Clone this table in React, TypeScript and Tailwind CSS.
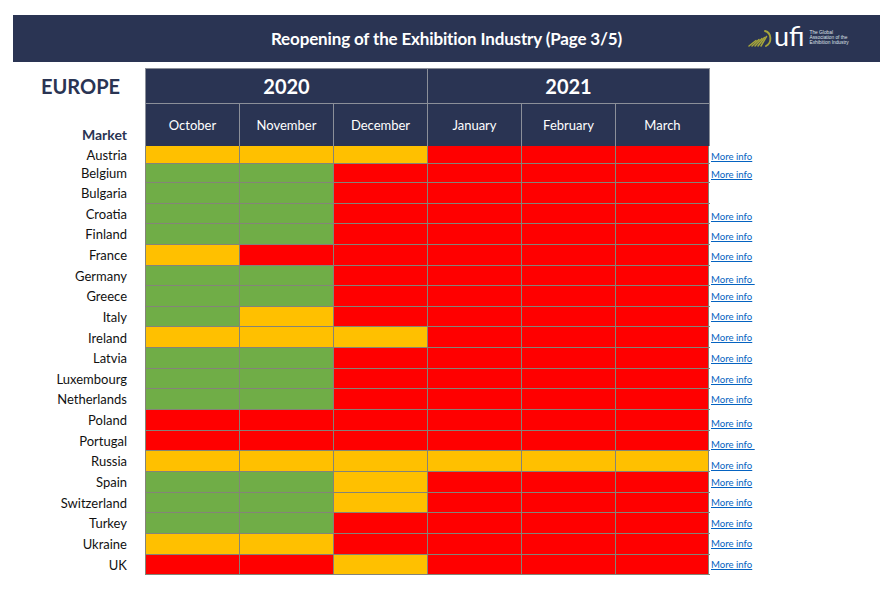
import React from "react";

type C = "Y" | "G" | "R";
const rows: { name: string; cells: C[]; link: boolean; trail?: boolean; shift: number }[] = [
  { name: "Austria", cells: ["Y", "Y", "Y", "R", "R", "R"], link: true, shift: 2 },
  { name: "Belgium", cells: ["G", "G", "R", "R", "R", "R"], link: true, shift: 1 },
  { name: "Bulgaria", cells: ["G", "G", "R", "R", "R", "R"], link: false, shift: 0 },
  { name: "Croatia", cells: ["G", "G", "R", "R", "R", "R"], link: true, shift: 3 },
  { name: "Finland", cells: ["G", "G", "R", "R", "R", "R"], link: true, shift: 2 },
  { name: "France", cells: ["Y", "R", "R", "R", "R", "R"], link: true, shift: 2 },
  { name: "Germany", cells: ["G", "G", "R", "R", "R", "R"], link: true, trail: true, shift: 4 },
  { name: "Greece", cells: ["G", "G", "R", "R", "R", "R"], link: true, shift: 0 },
  { name: "Italy", cells: ["G", "Y", "R", "R", "R", "R"], link: true, shift: 0 },
  { name: "Ireland", cells: ["Y", "Y", "Y", "R", "R", "R"], link: true, shift: 0 },
  { name: "Latvia", cells: ["G", "G", "R", "R", "R", "R"], link: true, shift: 0 },
  { name: "Luxembourg", cells: ["G", "G", "R", "R", "R", "R"], link: true, shift: 1 },
  { name: "Netherlands", cells: ["G", "G", "R", "R", "R", "R"], link: true, shift: 0 },
  { name: "Poland", cells: ["R", "R", "R", "R", "R", "R"], link: true, shift: 3 },
  { name: "Portugal", cells: ["R", "R", "R", "R", "R", "R"], link: true, trail: true, shift: 4 },
  { name: "Russia", cells: ["Y", "Y", "Y", "Y", "Y", "Y"], link: true, shift: 4 },
  { name: "Spain", cells: ["G", "G", "Y", "R", "R", "R"], link: true, shift: 1 },
  { name: "Switzerland", cells: ["G", "G", "Y", "R", "R", "R"], link: true, shift: 0 },
  { name: "Turkey", cells: ["G", "G", "R", "R", "R", "R"], link: true, shift: 0 },
  { name: "Ukraine", cells: ["Y", "Y", "R", "R", "R", "R"], link: true, shift: 0 },
  { name: "UK", cells: ["R", "R", "Y", "R", "R", "R"], link: true, shift: 0 },
];

const bg: Record<C, string> = {
  Y: "bg-[#ffc000]",
  G: "bg-[#70ad47]",
  R: "bg-[#ff0000]",
};

const shiftCls: Record<number, string> = {
  0: "",
  1: "pt-[2px]",
  2: "pt-[4px]",
  3: "pt-[6px]",
  4: "pt-[8px]",
};

const heightCls = (i: number) =>
  i === 0 ? "h-[18px]" : i === 1 ? "h-[19px]" : "h-[20.65px]";

const months = ["October", "November", "December", "January", "February", "March"];

function Logo() {
  return (
    <div className="flex items-center">
      <svg width="25" height="20" viewBox="0 0 25 20">
        <g stroke="#a7a63a" strokeWidth="1.5" strokeLinecap="round" fill="none">
          <line x1="1" y1="18" x2="8" y2="12.5" />
          <line x1="4" y1="18" x2="11" y2="11.5" />
          <line x1="7" y1="18" x2="14" y2="10.5" />
          <line x1="10" y1="18" x2="16.5" y2="9.5" />
          <line x1="13" y1="18" x2="18.5" y2="8.5" />
          <path d="M17 3 C 24 5, 24 15, 18 18" strokeWidth="1.9" />
        </g>
      </svg>
      <span className="ml-[1px] text-white text-[27px] leading-none font-['Lato',sans-serif] -mt-[4px]">
        ufi
      </span>
      <div className="ml-[5px] flex flex-col text-[4.8px] leading-[5.2px] text-[#dfe2ea] font-['Liberation_Sans',sans-serif]">
        <span>The Global</span>
        <span>Association of the</span>
        <span>Exhibition Industry</span>
      </div>
    </div>
  );
}

export default function App() {
  return (
    <div className="w-[892px] h-[605px] bg-white font-['Lato',sans-serif] text-[#111]">
      <div className="pt-[15px] px-[13px] w-[893px]">
        <div className="h-[47px] bg-[#2a3453] relative flex items-center justify-center">
          <span className="text-white font-bold text-[17px] tracking-[-0.15px] pt-[1px]">
            Reopening of the Exhibition Industry (Page 3/5)
          </span>
          <div className="absolute left-[735px] top-[11px]">
            <Logo />
          </div>
        </div>
      </div>

      <div className="mt-[6px] flex">
        <div className="w-[145px] flex flex-col">
          <div className="h-[36px] flex items-center pl-[41px]">
            <span className="text-[20px] font-bold text-[#2a3453]">EUROPE</span>
          </div>
          <div className="h-[42px] flex items-end justify-end pr-[18px] pb-[1px]">
            <span className="text-[14px] font-bold text-[#2a3453]">Market</span>
          </div>
        </div>
        <div className="w-[565px] bg-[#2a3453] border border-[#8b8f99] border-b-0 flex flex-col">
          <div className="h-[35px] flex border-b border-[#8b8f99]">
            <div className="w-[282px] border-r border-[#8b8f99] flex items-center justify-center text-white font-bold text-[20px]">
              2020
            </div>
            <div className="flex-1 flex items-center justify-center text-white font-bold text-[20px]">
              2021
            </div>
          </div>
          <div className="h-[42px] flex">
            {months.map((m, i) => (
              <div
                key={m}
                className={
                  "w-[94px] flex items-center justify-center text-white text-[13px] pt-[1px] " +
                  (i < 5 ? "border-r border-[#8b8f99]" : "flex-1")
                }
              >
                {m}
              </div>
            ))}
          </div>
        </div>
      </div>

      <div className="flex flex-col">
        {rows.map((r, i) => (
          <div key={r.name} className={"flex " + heightCls(i)}>
            <div className="w-[145px] flex items-center justify-end pr-[18px] pt-[1px] text-[13px] text-[#111]">
              {r.name}
            </div>
            <div className="w-[565px] flex border-l border-b border-[#848478] box-border">
              {r.cells.map((c, j) => (
                <div
                  key={j}
                  className={
                    bg[c] + " h-full border-r border-[#848478] " + (j < 5 ? "w-[94px]" : "w-[93px]")
                  }
                />
              ))}
            </div>
            <div className={"flex items-center pl-[1px] " + shiftCls[r.shift]}>
              {r.link && (
                <a
                  href="#"
                  className="text-[9.6px] leading-none text-[#0563c1] underline font-['Lato',sans-serif] whitespace-pre"
                >
                  {r.trail ? "More info " : "More info"}
                </a>
              )}
            </div>
          </div>
        ))}
      </div>
    </div>
  );
}
